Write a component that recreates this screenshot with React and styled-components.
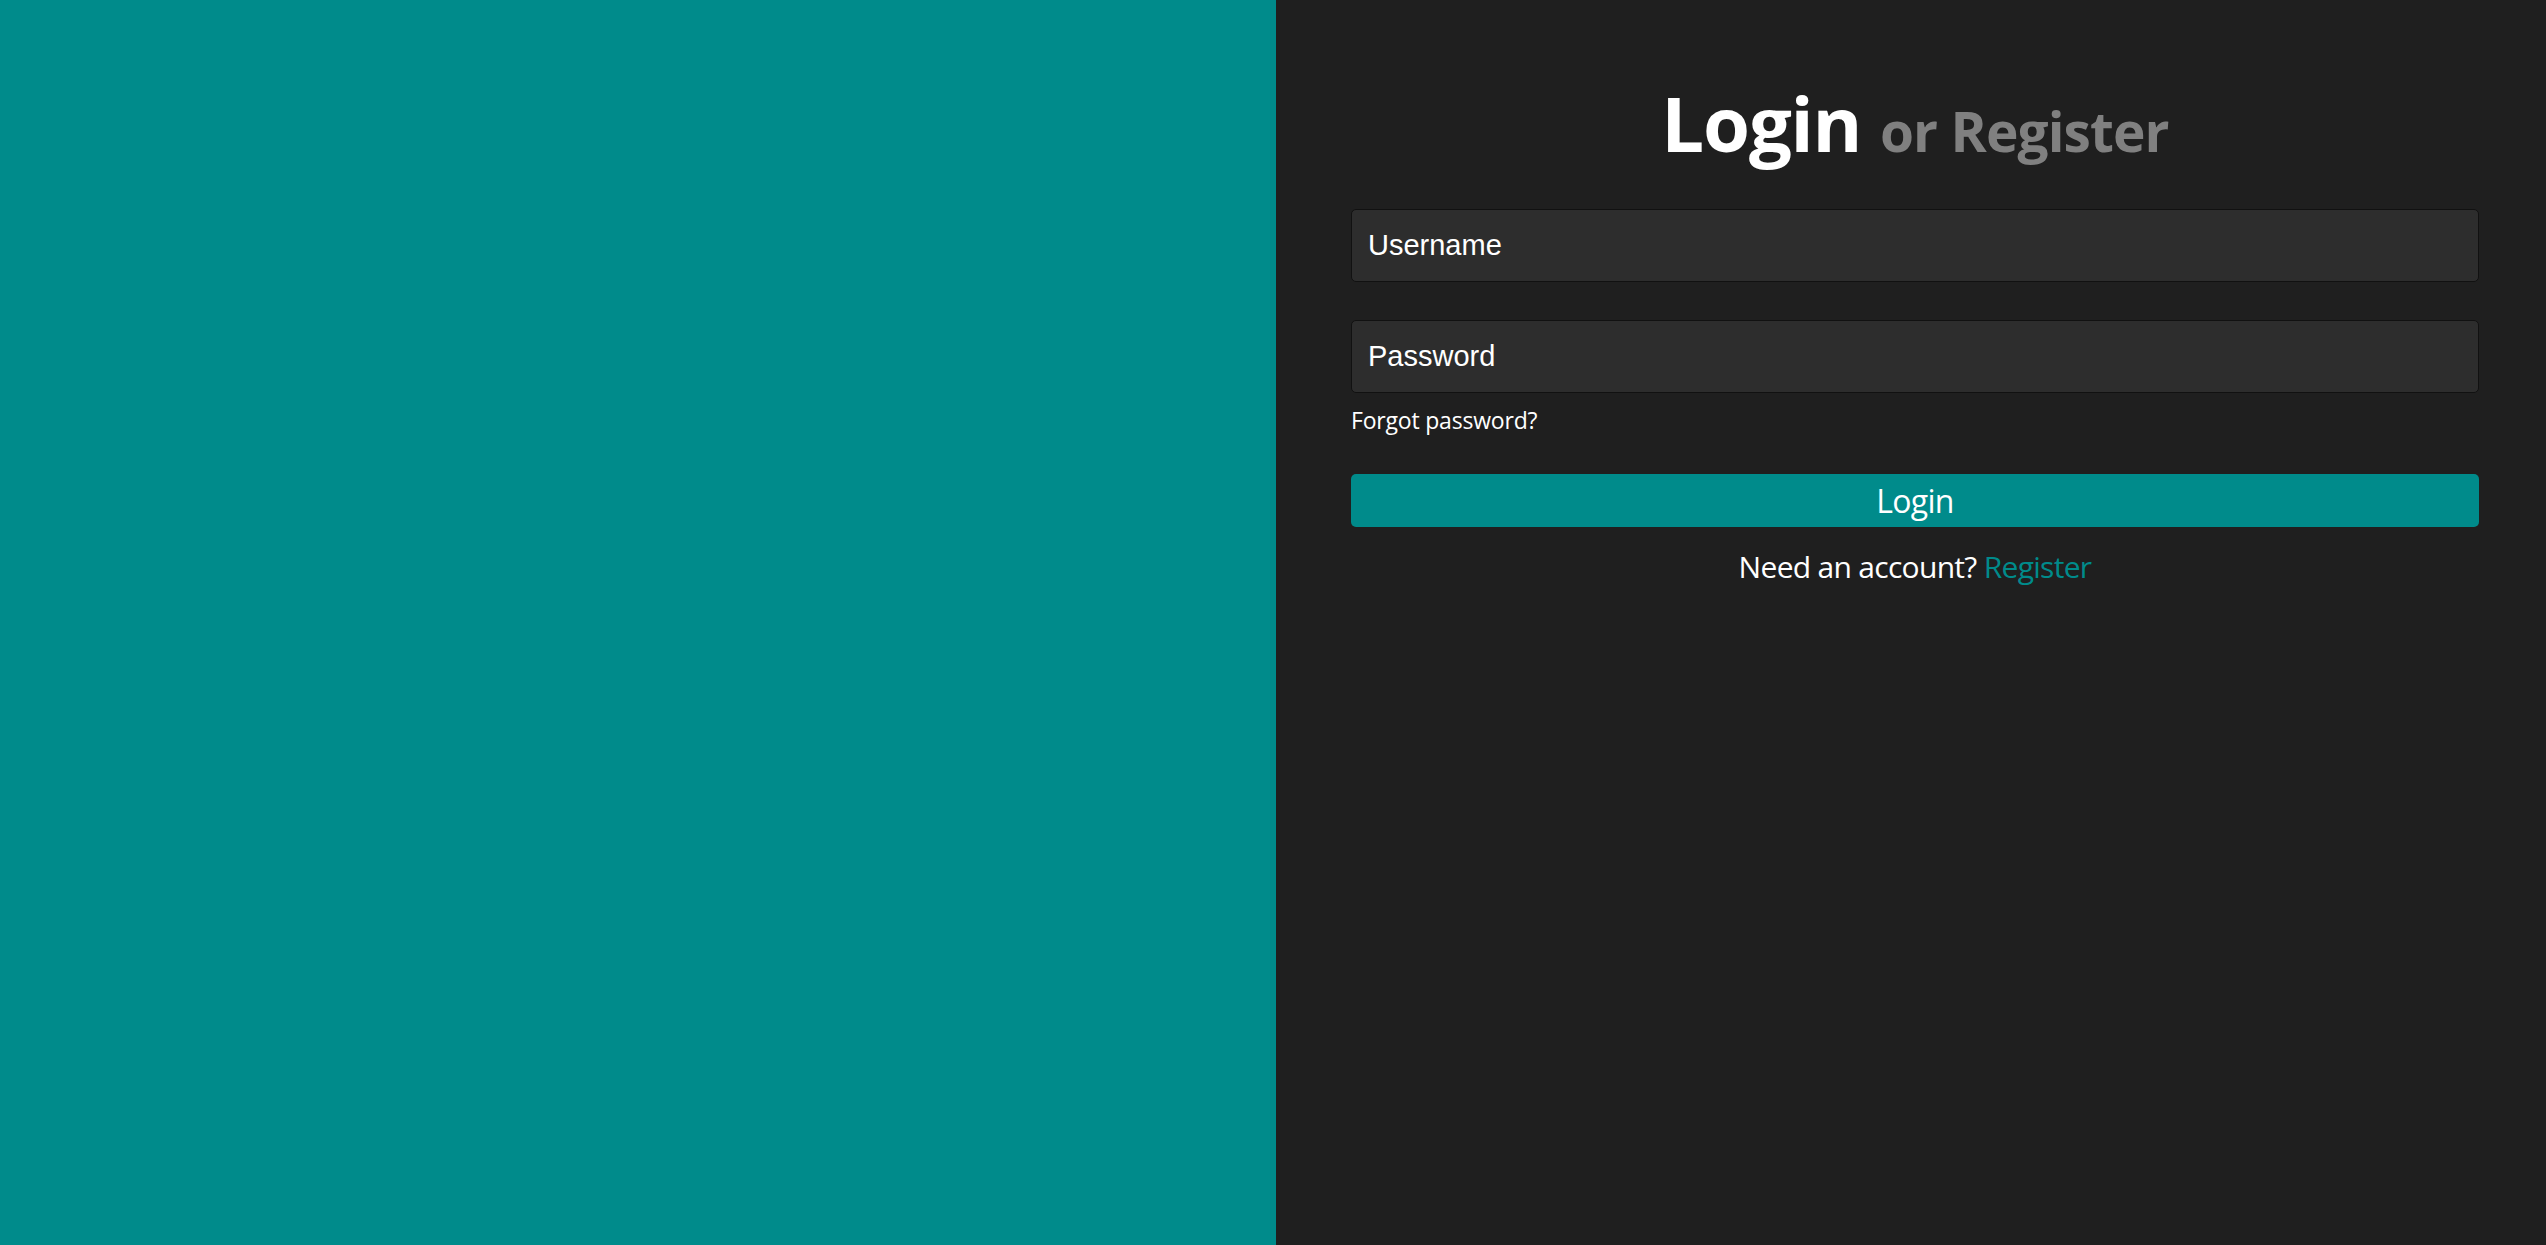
import React from 'react';
import styled, { createGlobalStyle } from 'styled-components';

const GlobalStyle = createGlobalStyle`
  html, body {
    margin: 0;
    padding: 0;
    height: 100%;
    background: #1f1f1f;
  }
  #root {
    height: 100%;
  }
`;

const Page = styled.div`
  display: flex;
  height: 100vh;
  font-family: "Open Sans", "Noto Sans", sans-serif;
`;

const SidePanel = styled.div`
  flex: 0 0 1276px;
  background: darkcyan;
`;

const FormPanel = styled.div`
  flex: 1;
  background: #1f1f1f;
  padding: 85px 67px 0 75px;
`;

const Form = styled.form`
  display: flex;
  flex-direction: column;
`;

const Title = styled.h1`
  margin: 0 0 48px;
  font-size: 76px;
  line-height: 1;
  font-weight: 700;
  color: #fff;
  text-align: center;
  letter-spacing: -1.2px;
`;

const TitleAlt = styled.span`
  font-size: 55px;
  color: #808080;
  letter-spacing: -0.9px;
`;

const Input = styled.input`
  box-sizing: border-box;
  height: 73px;
  margin-bottom: ${(p) => p.$gap || 0}px;
  padding: 0 16px;
  border: 1px solid #111;
  border-radius: 5px;
  background: #2d2d2d;
  color: #fff;
  font-family: "Liberation Sans", Arial, sans-serif;
  font-size: 29px;
  outline: none;

  &::placeholder {
    color: #fff;
    opacity: 1;
  }
`;

const Forgot = styled.a`
  align-self: flex-start;
  margin-bottom: 39px;
  font-size: 23px;
  line-height: 27.6px;
  color: #fff;
  text-decoration: none;
  letter-spacing: -0.2px;
`;

const SubmitButton = styled.button`
  height: 53px;
  border: none;
  border-radius: 5px;
  background: darkcyan;
  color: #fff;
  font-family: "Open Sans", "Noto Sans", sans-serif;
  font-size: 32px;
  cursor: pointer;
  letter-spacing: -0.7px;
`;

const Footer = styled.p`
  margin: 22px 0 0;
  font-size: 30px;
  line-height: 36px;
  color: #fff;
  text-align: center;
  letter-spacing: -0.7px;
`;

const FooterLink = styled.a`
  color: darkcyan;
  text-decoration: none;
`;

export default function App() {
  return (
    <>
      <GlobalStyle />
      <Page>
        <SidePanel />
        <FormPanel>
          <Form onSubmit={(e) => e.preventDefault()}>
            <Title>
              Login <TitleAlt>or Register</TitleAlt>
            </Title>
            <Input type="text" placeholder="Username" $gap={38} />
            <Input type="password" placeholder="Password" $gap={14} />
            <Forgot href="#">Forgot password?</Forgot>
            <SubmitButton type="submit">Login</SubmitButton>
            <Footer>
              Need an account? <FooterLink href="#">Register</FooterLink>
            </Footer>
          </Form>
        </FormPanel>
      </Page>
    </>
  );
}
